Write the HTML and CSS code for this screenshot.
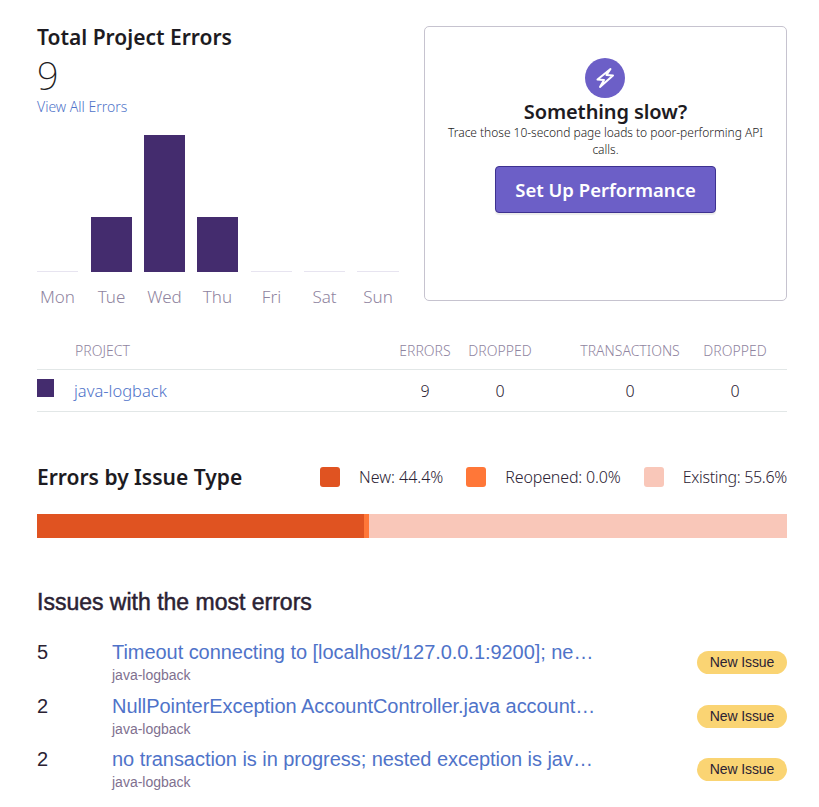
FILE: index.html
```html
<!DOCTYPE html>
<html lang="en">
<head>
    <meta charset="UTF-8">
    <title>Weekly Report</title>
    <link rel="stylesheet" href="styles.css">
</head>
<body>
    <div class="top">
        <div class="totales">
            <h1 class="titulo">Total Project Errors</h1>
            <div class="total">9</div>
            <a class="ver-todo" href="#">View All Errors</a>
            <div class="grafico">
                <div class="dia"><div class="barra vacia"></div><span>Mon</span></div>
                <div class="dia"><div class="barra" style="height:55px"></div><span>Tue</span></div>
                <div class="dia"><div class="barra" style="height:137px"></div><span>Wed</span></div>
                <div class="dia"><div class="barra" style="height:55px"></div><span>Thu</span></div>
                <div class="dia"><div class="barra vacia"></div><span>Fri</span></div>
                <div class="dia"><div class="barra vacia"></div><span>Sat</span></div>
                <div class="dia"><div class="barra vacia"></div><span>Sun</span></div>
            </div>
        </div>
        <div class="tarjeta">
            <div class="icono">
                <svg width="24" height="24" viewBox="0 0 24 24" fill="none" stroke="#fff" stroke-width="2" stroke-linejoin="round" stroke-linecap="round">
                    <path d="M17.5 3L4.5 13.5l6.5.5L7 21l13-11.5-6.5-.5z"/>
                </svg>
            </div>
            <h2 class="tarjeta-titulo">Something slow?</h2>
            <p class="tarjeta-texto">Trace those 10-second page loads to poor-performing API calls.</p>
            <a class="boton" href="#">Set Up Performance</a>
        </div>
    </div>

    <div class="tabla">
        <div class="fila cabecera">
            <div></div>
            <div>PROJECT</div>
            <div class="num">ERRORS</div>
            <div class="num">DROPPED</div>
            <div class="num">TRANSACTIONS</div>
            <div class="num">DROPPED</div>
        </div>
        <div class="fila">
            <div><div class="muestra"></div></div>
            <div><a href="#">java-logback</a></div>
            <div class="num">9</div>
            <div class="num">0</div>
            <div class="num">0</div>
            <div class="num">0</div>
        </div>
    </div>

    <div class="tipos">
        <h2 class="titulo">Errors by Issue Type</h2>
        <div class="leyenda">
            <div class="cuadro nuevo"></div><span>New: 44.4%</span>
            <div class="cuadro reabierto"></div><span>Reopened: 0.0%</span>
            <div class="cuadro existente"></div><span>Existing: 55.6%</span>
        </div>
    </div>
    <div class="progreso">
        <div class="nuevo" style="width:327px"></div>
        <div class="reabierto" style="width:5px"></div>
        <div class="existente"></div>
    </div>

    <h2 class="incidencias-titulo">Issues with the most errors</h2>
    <div class="incidencia">
        <div class="cuenta">5</div>
        <div class="detalle">
            <a href="#">Timeout connecting to [localhost/127.0.0.1:9200]; nested exception is java.net.SocketTimeoutException</a>
            <small>java-logback</small>
        </div>
        <div class="pastilla">New Issue</div>
    </div>
    <div class="incidencia">
        <div class="cuenta">2</div>
        <div class="detalle">
            <a href="#">NullPointerException AccountController.java accountService.findById</a>
            <small>java-logback</small>
        </div>
        <div class="pastilla">New Issue</div>
    </div>
    <div class="incidencia">
        <div class="cuenta">2</div>
        <div class="detalle">
            <a href="#">no transaction is in progress; nested exception is javax.persistence.TransactionRequiredException</a>
            <small>java-logback</small>
        </div>
        <div class="pastilla">New Issue</div>
    </div>
</body>
</html>
```

FILE: styles.css
```css
* {
    margin: 0;
    padding: 0;
    box-sizing: border-box;
}
body {
    font-family: 'Noto Sans', sans-serif;
    font-weight: 300;
    color: #2b2233;
    background: #fff;
    padding: 26px 32px 0 37px;
    overflow: hidden;
}
a {
    color: #4f73c9;
    text-decoration: none;
}
.top {
    display: flex;
    justify-content: space-between;
}
.totales {
    width: 362px;
}
.titulo {
    font-size: 21px;
    line-height: 22px;
    font-weight: 600;
    color: #1d1b22;
}
.total {
    font-size: 38px;
    line-height: 42px;
    margin-top: 6px;
    font-weight: 200;
    color: #1d1b22;
}
.ver-todo {
    display: block;
    font-size: 14px;
    line-height: 20px;
    margin-top: 1px;
}
.grafico {
    display: flex;
    gap: 12px;
    height: 174px;
    margin-top: 18px;
}
.dia {
    width: 41px;
    display: flex;
    flex-direction: column;
    justify-content: flex-end;
    align-items: center;
    font-size: 17px;
    line-height: 24px;
    color: #8f84a0;
}
.dia:nth-child(3n+2) {
    margin-left: 1px;
}
.dia:last-child {
    width: 42px;
}
.dia span {
    margin-top: 13px;
}
.barra {
    width: 100%;
    background: #442c6e;
}
.barra.vacia {
    height: 1px;
    background: #e7e4f0;
}
.tarjeta {
    width: 363px;
    height: 275px;
    border: 1px solid #c6c3cf;
    border-radius: 5px;
    display: flex;
    flex-direction: column;
    align-items: center;
    padding: 31px 20px 0;
    text-align: center;
}
.icono {
    width: 40px;
    height: 40px;
    border-radius: 50%;
    background: #6c5fc7;
    display: flex;
    align-items: center;
    justify-content: center;
    margin-right: 1px;
}
.tarjeta-titulo {
    font-size: 20px;
    line-height: 24px;
    font-weight: 600;
    letter-spacing: -0.1px;
    color: #1d1b22;
    margin-top: 2px;
}
.tarjeta-texto {
    font-size: 12px;
    line-height: 17px;
    letter-spacing: -0.02px;
    color: #1d1b22;
}
.boton {
    margin-top: 8px;
    width: 221px;
    height: 47px;
    line-height: 45px;
    border: 1px solid #3d3190;
    border-radius: 4px;
    background: #6c5fc7;
    color: #fff;
    font-size: 18.5px;
    font-weight: 600;
    box-shadow: 0 2px 1px rgba(0, 0, 0, 0.08);
}
.tabla {
    margin-top: 24px;
}
.fila {
    display: grid;
    grid-template-columns: 37px 1fr 52px 126px 106px 104px;
    align-items: center;
    height: 42px;
    border-bottom: 1px solid #e2e7e7;
    font-size: 16px;
}
.fila a {
    font-size: 16.5px;
}
.cabecera {
    height: 37px;
    padding-bottom: 2px;
    font-size: 14px;
    color: #8f84a0;
}
.cabecera div:nth-child(2) {
    padding-left: 1px;
}
.num {
    text-align: center;
}
.fila .num:nth-child(4) {
    padding-right: 28px;
}
.muestra {
    width: 17px;
    height: 18px;
    background: #442c6e;
    margin-bottom: 6px;
}
.tipos {
    display: flex;
    justify-content: space-between;
    align-items: center;
    margin-top: 54px;
}
.leyenda {
    display: flex;
    align-items: center;
    font-size: 16px;
    color: #2b2233;
}
.leyenda span {
    margin-left: 19px;
    margin-right: 23px;
}
.leyenda span:nth-of-type(2) {
    letter-spacing: -0.15px;
}
.leyenda span:last-child {
    margin-right: 0;
    letter-spacing: -0.3px;
}
.cuadro {
    width: 20px;
    height: 20px;
    border-radius: 3px;
}
.nuevo {
    background: #e05321;
}
.reabierto {
    background: #ff7738;
}
.existente {
    background: #f9c7b9;
}
.progreso {
    display: flex;
    height: 24px;
    margin-top: 26px;
}
.progreso .existente {
    flex: 1;
}
.incidencias-titulo {
    font-family: 'Liberation Sans', sans-serif;
    font-size: 23px;
    line-height: 28px;
    font-weight: 400;
    -webkit-text-stroke: 0.5px #2b2233;
    margin-top: 50px;
    margin-bottom: 24px;
}
.incidencia {
    display: grid;
    grid-template-columns: 75px 1fr 90px;
    height: 53.5px;
    font-family: 'Liberation Sans', sans-serif;
    font-weight: 400;
}
.cuenta {
    font-size: 20px;
    line-height: 24px;
}
.detalle {
    min-width: 0;
}
.detalle a {
    display: block;
    width: 490px;
    font-size: 20px;
    line-height: 24px;
    letter-spacing: -0.05px;
    white-space: nowrap;
    overflow: hidden;
    text-overflow: ellipsis;
}
.detalle small {
    display: block;
    font-size: 14px;
    line-height: 22px;
    color: #80708f;
}
.pastilla {
    height: 23px;
    margin-top: 11px;
    border-radius: 12px;
    background: #fad473;
    font-size: 14px;
    line-height: 23px;
    letter-spacing: -0.1px;
    text-align: center;
}
```
